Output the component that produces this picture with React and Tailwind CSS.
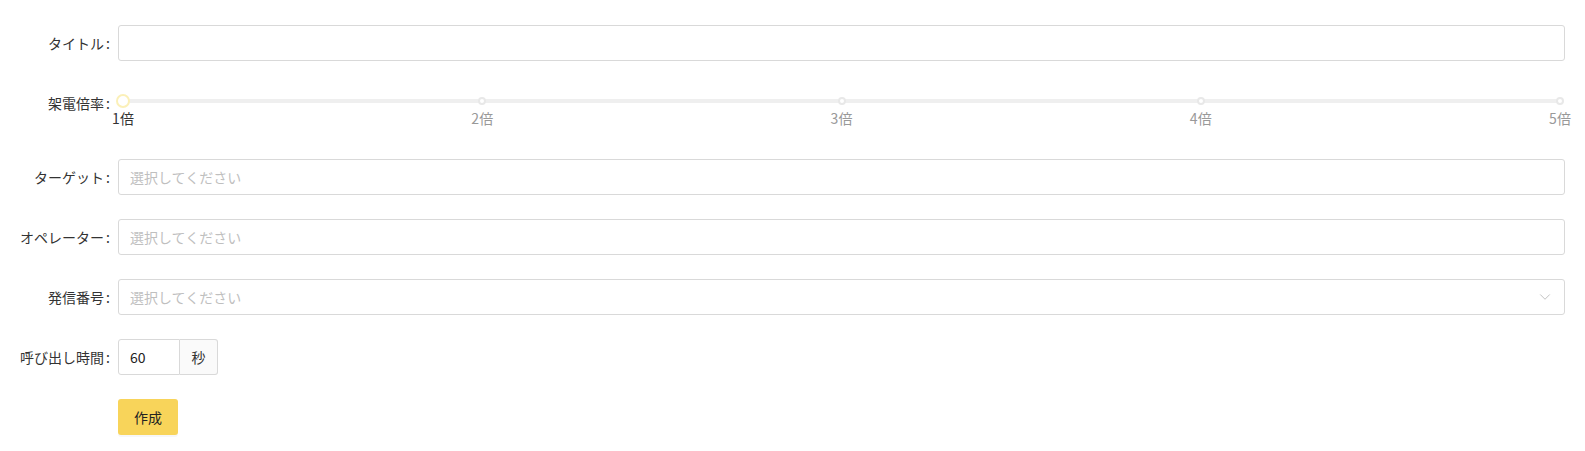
import { ChevronDown } from 'lucide-react'

const font = { fontFamily: '"Noto Sans CJK JP", "Noto Sans", sans-serif' }

function Row({ label, children, className = '' }) {
  return (
    <div className={`mb-6 flex items-start ${className}`}>
      <label className="flex h-9 w-[118px] flex-none items-center justify-end pr-[8px] text-[14px] text-[#333]">
        {label}
        <span className="ml-[2px]">:</span>
      </label>
      <div className="min-w-0 flex-1">{children}</div>
    </div>
  )
}

function TextBox({ placeholder, chevron }) {
  return (
    <div className="flex h-9 items-center rounded-[3px] border border-[#d9d9d9] bg-white pr-[10px] pl-[11px]">
      <span className="flex-1 text-[14px] text-[#bfbfbf]">{placeholder}</span>
      {chevron && <ChevronDown size={18} strokeWidth={1.2} className="text-[#bbb]" />}
    </div>
  )
}

const marks = [
  { label: '1倍', pos: 'left-[0%]' },
  { label: '2倍', pos: 'left-[25%]' },
  { label: '3倍', pos: 'left-[50%]' },
  { label: '4倍', pos: 'left-[75%]' },
  { label: '5倍', pos: 'left-[100%]' },
]

function RateSlider() {
  return (
    <div className="px-[5px] pt-[14px]">
      <div className="relative h-[36px]">
        <div className="h-[4px] rounded-full bg-[#efefef]" />
        {marks.map((m, i) => (
          <div key={m.label} className={`absolute top-0 ${m.pos}`}>
            {i === 0 ? (
              <span className="absolute top-[-5px] left-[-7px] h-[14px] w-[14px] rounded-full border-2 border-[#fbf0b8] bg-white" />
            ) : (
              <span className="absolute top-[-2px] left-[-4px] h-[8px] w-[8px] rounded-full border-2 border-[#e8e8e8] bg-white" />
            )}
            <span
              className={`absolute top-[9px] -translate-x-1/2 text-[14px] whitespace-nowrap ${
                i === 0 ? 'text-[#333]' : 'text-[#999]'
              }`}
            >
              {m.label}
            </span>
          </div>
        ))}
      </div>
    </div>
  )
}

export default function App() {
  return (
    <div className="min-h-[451px] w-full bg-white pt-[25px] pr-5" style={font}>
      <Row label="タイトル">
        <div className="h-9 rounded-[3px] border border-[#d9d9d9] bg-white" />
      </Row>
      <Row label="架電倍率" className="h-[50px]">
        <RateSlider />
      </Row>
      <Row label="ターゲット">
        <TextBox placeholder="選択してください" />
      </Row>
      <Row label="オペレーター">
        <TextBox placeholder="選択してください" />
      </Row>
      <Row label="発信番号">
        <TextBox placeholder="選択してください" chevron />
      </Row>
      <Row label="呼び出し時間">
        <div className="flex h-9 w-[100px]">
          <div className="flex w-[62px] items-center rounded-l-[3px] border border-[#d9d9d9] px-[11px] text-[14px] text-[#222]">
            60
          </div>
          <div className="flex w-[38px] items-center justify-center rounded-r-[3px] border border-l-0 border-[#d9d9d9] bg-[#fafafa] text-[14px] text-[#333]">
            秒
          </div>
        </div>
      </Row>
      <div className="flex">
        <div className="w-[118px] flex-none" />
        <button className="h-9 w-[60px] rounded-[3px] bg-[#f8d45a] text-[14px] text-[#222] shadow-[0_2px_0_rgba(0,0,0,0.03)]">
          作成
        </button>
      </div>
    </div>
  )
}
